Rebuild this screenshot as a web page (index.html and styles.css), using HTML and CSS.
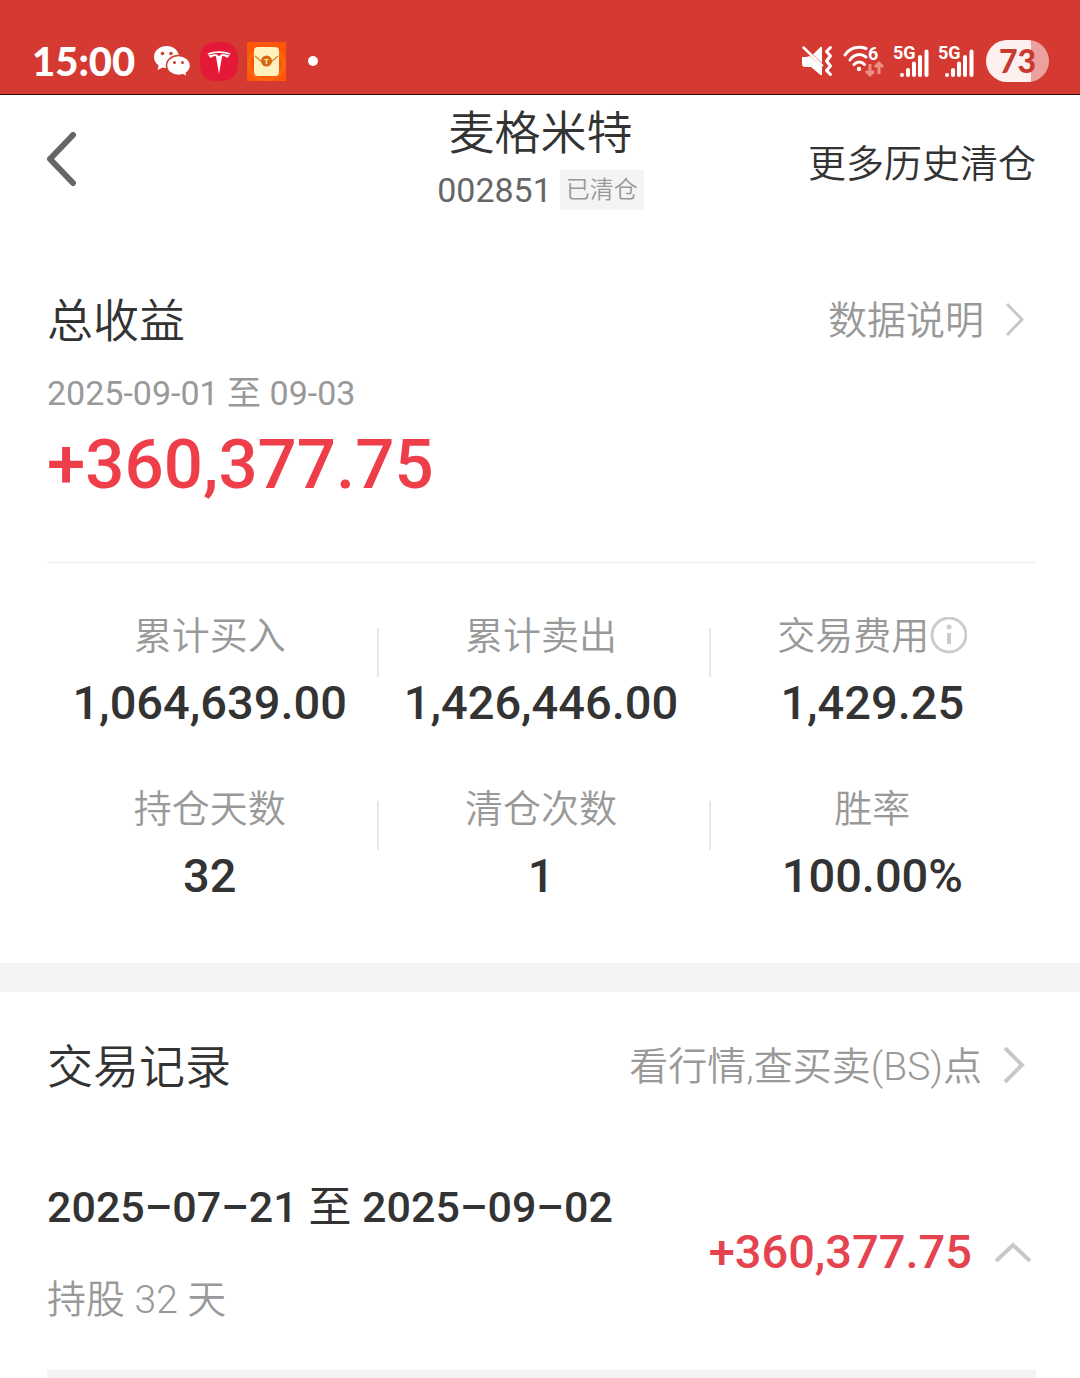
FILE: index.html
```html
<!DOCTYPE html>
<html lang="zh-CN">
<head>
    <meta charset="UTF-8">
    <meta name="viewport" content="width=device-width, initial-scale=1.0">
    <title>麦格米特 已清仓</title>
    <link rel="stylesheet" href="styles.css">
</head>
<body>
    <!-- Status bar -->
    <div class="status-bar">
        <div class="status-left">
            <span class="clock">15:00</span>
            <svg class="icon-wechat" width="38" height="32" viewBox="0 0 38 32" aria-hidden="true">
                <path fill="#fff" d="M14 1C6.500 1 1 5.800 1 12c0 3.500 1.800 6.300 4.600 8.400L4.600 25l5-2.600c1.600.4 3 .6 4.400.6C21.500 23 26 18 26 12S21 1 14 1z"/>
                <path fill="#fff" stroke="#d43a32" stroke-width="1.500" d="M25.500 10.500c-6.500 0-12 4.300-12 10s5.500 10 12 10c1.500 0 3-.3 4.300-.7l4.700 2-1.200-3.800c2.700-1.800 4.200-4.500 4.200-7.500 0-5.700-5.500-10-12-10z"/>
                <g fill="#d43a32">
                    <circle cx="9.500" cy="8.500" r="1.800"/>
                    <circle cx="18" cy="8.500" r="1.800"/>
                    <circle cx="21.500" cy="17.500" r="1.500"/>
                    <circle cx="29.500" cy="17.500" r="1.500"/>
                </g>
            </svg>
            <svg class="icon-app" width="38" height="39" viewBox="0 0 38 39" aria-hidden="true">
                <path fill="#e31937" d="M19 0C33 0 38 5 38 19.500S33 39 19 39 0 34 0 19.500 5 0 19 0z"/>
                <path fill="#fff" d="M7.500 11.500c7-3 16-3 23 0l-.6 1.200c-6.500-2.400-15.300-2.400-21.800 0z"/>
                <path fill="#fff" d="M8.500 13.300c3-.9 5.500-1.300 7.700-1.400L19 14.200l2.800-2.300c2.200.1 4.700.5 7.700 1.400-.7 1.500-1.700 2.400-2.800 2.700-.6-1.300-2-1.800-4.600-1.900L19 32l-3.100-17.900c-2.600.1-4 .6-4.600 1.900-1.100-.3-2.100-1.200-2.800-2.700z"/>
            </svg>
            <svg class="icon-app" width="39" height="39" viewBox="0 0 39 39" aria-hidden="true">
                <defs>
                    <radialGradient id="glow">
                        <stop offset="0.500" stop-color="#f04a00"/>
                        <stop offset="1" stop-color="#ff6a10"/>
                    </radialGradient>
                </defs>
                <rect width="39" height="39" fill="#ff5708"/>
                <ellipse cx="19.500" cy="22" rx="19" ry="17" fill="url(#glow)"/>
                <rect x="7" y="5" width="25" height="29" rx="4" fill="#fff0bf"/>
                <path d="M8 14l7 6h9l7-6" fill="none" stroke="#dc8c35" stroke-width="1.500"/>
                <circle cx="19.500" cy="19" r="5.500" fill="#d96812"/>
                <text class="seal" x="19.500" y="22" text-anchor="middle">T</text>
            </svg>
            <span class="more-dot"></span>
        </div>
        <div class="status-right">
            <svg width="32" height="32" viewBox="0 0 32 32" aria-hidden="true">
                <path fill="#fff" d="M0 12h4l4-1 12 11V29c0 1.200-1 1.700-1.800.8L9 22H3c-2 0-3-1-3-3zM11 9.500l7.200-7.300c.8-.9 1.800-.4 1.800.8v15z"/>
                <path d="M1.500 2.500L20 20.500" stroke="#fff" stroke-width="2.500" stroke-linecap="round"/>
                <path d="M28.500 2.500l-4 4 4 4.500-4 5 4 5-4 4.500 4 4" fill="none" stroke="#fff" stroke-width="3" stroke-linecap="round" stroke-linejoin="round"/>
            </svg>
            <svg width="42" height="40" viewBox="0 0 42 40" aria-hidden="true">
                <g fill="none" stroke="#fff" stroke-width="3" stroke-linecap="round">
                    <path d="M3 14C8 6.500 17 4.500 24 7.500"/>
                    <path d="M8 19C12 13 19 12 24 16"/>
                    <path d="M12 23.500c3-3.500 7.500-3.500 10.500 0"/>
                </g>
                <circle cx="17" cy="28" r="2.200" fill="#fff"/>
                <text class="net-label" x="26" y="19">6</text>
                <g class="traffic">
                    <path d="M28 23v11M24 30l4 4 4-4"/>
                    <path d="M37 33V22M33 26l4-4 4 4"/>
                </g>
            </svg>
            <svg width="37" height="40" viewBox="0 0 37 40" aria-hidden="true">
                <text class="net-label" x="1" y="18">5G</text>
                <path class="bars" d="M10 34v.1M16 34v-5M22 34V22.500M28 34V16M34.500 34V10.500"/>
            </svg>
            <svg width="37" height="40" viewBox="0 0 37 40" aria-hidden="true">
                <text class="net-label" x="1" y="18">5G</text>
                <path class="bars" d="M10 34v.1M16 34v-5M22 34V22.500M28 34V16M34.500 34V10.500"/>
            </svg>
            <span class="battery">73</span>
        </div>
    </div>

    <!-- Header -->
    <header class="header">
        <button type="button" class="back" aria-label="返回">
            <svg width="32" height="56" viewBox="0 0 32 56">
                <path d="M28 3L5 27 28 51" fill="none" stroke="#666" stroke-width="6" stroke-linecap="round" stroke-linejoin="round"/>
            </svg>
        </button>
        <div class="stock">
            <h1>麦格米特</h1>
            <div class="stock-code">002851<span class="tag">已清仓</span></div>
        </div>
        <a href="#" class="history">更多历史清仓</a>
    </header>

    <main>
        <!-- Total profit -->
        <section class="total">
            <div class="section-head">
                <h2>总收益</h2>
                <a href="#" class="more">数据说明
                    <svg width="22" height="38" viewBox="0 0 22 38" aria-hidden="true">
                        <path d="M3 2l15 15.500L3 33" fill="none" stroke="#c8c8c8" stroke-width="3"/>
                    </svg>
                </a>
            </div>
            <p class="range">2025-09-01 至 09-03</p>
            <p class="profit">+360,377.75</p>
        </section>

        <!-- Stats -->
        <dl class="stats">
            <div class="stat">
                <dt>累计买入</dt>
                <dd>1,064,639.00</dd>
            </div>
            <div class="stat">
                <dt>累计卖出</dt>
                <dd>1,426,446.00</dd>
            </div>
            <div class="stat">
                <dt>交易费用<button type="button" class="info" aria-label="费用说明">
                    <svg width="38" height="38" viewBox="0 0 38 38">
                        <circle cx="20" cy="18" r="17" fill="none" stroke="#ccc" stroke-width="3"/>
                        <circle cx="20" cy="10" r="2.500" fill="#ccc"/>
                        <path d="M20 16v11" stroke="#ccc" stroke-width="4"/>
                    </svg>
                </button></dt>
                <dd>1,429.25</dd>
            </div>
            <div class="stat">
                <dt>持仓天数</dt>
                <dd>32</dd>
            </div>
            <div class="stat">
                <dt>清仓次数</dt>
                <dd>1</dd>
            </div>
            <div class="stat">
                <dt>胜率</dt>
                <dd>100.00%</dd>
            </div>
        </dl>

        <!-- Trade records -->
        <section class="records">
            <div class="section-head">
                <h2>交易记录</h2>
                <a href="#" class="more">看行情,查买卖(BS)点
                    <svg width="24" height="40" viewBox="0 0 24 40" aria-hidden="true">
                        <path d="M3 1l17 17L3 35" fill="none" stroke="#c8c8c8" stroke-width="4"/>
                    </svg>
                </a>
            </div>
            <div class="record">
                <div>
                    <h3>2025–07–21 <span class="cn">至</span> 2025–09–02</h3>
                    <p class="days">持股 32 天</p>
                </div>
                <div class="record-profit">
                    <span>+360,377.75</span>
                    <button type="button" class="toggle" aria-label="收起">
                        <svg width="38" height="22" viewBox="0 0 38 22">
                            <path d="M2 21L19 5l17 16" fill="none" stroke="#c8c8c8" stroke-width="4"/>
                        </svg>
                    </button>
                </div>
            </div>
            <div class="record-line"></div>
        </section>
    </main>
</body>
</html>
```
FILE: styles.css
```css
* {
    box-sizing: border-box;
}

body {
    margin: 0;
    font-family: Roboto, "Noto Sans CJK SC", sans-serif;
    background-color: #fff;
    color: #333;
}

h1, h2, h3, p, dl, dd {
    margin: 0;
    font-weight: 400;
}

a {
    color: inherit;
    text-decoration: none;
}

button {
    padding: 0;
    border: none;
    background: none;
    cursor: pointer;
}

svg {
    display: block;
    flex-shrink: 0;
}

/* Status bar */
.status-bar {
    display: flex;
    justify-content: space-between;
    height: 95px;
    padding: 28px 31px 0 32px;
    background-color: #d43a32;
    border-bottom: 1px solid #2b1010;
    color: #fff;
}

.status-left, .status-right {
    display: flex;
    align-items: center;
    height: 66px;
}

.clock {
    margin-right: 18px;
    font-family: Lato, sans-serif;
    font-size: 40px;
    font-weight: 900;
    line-height: 48px;
}

.icon-app {
    margin-left: 9px;
}

.seal {
    font-size: 8px;
    font-weight: 700;
    fill: #fff0bf;
}

.more-dot {
    width: 10px;
    height: 10px;
    margin-left: 22px;
    border-radius: 50%;
    background-color: #fff;
}

.status-right {
    gap: 8px;
}

.net-label {
    font-size: 18px;
    font-weight: 700;
    fill: #fff;
}

.traffic {
    fill: none;
    stroke: #ee8f87;
    stroke-width: 3;
}

.bars {
    stroke: #fff;
    stroke-width: 4;
    stroke-linecap: round;
}

.battery {
    width: 63px;
    margin-left: 4px;
    border-radius: 21px;
    background: linear-gradient(to right, #fdf0ef 72%, #eba19d 72%);
    color: #c93a31;
    font-family: Lato, sans-serif;
    font-size: 32px;
    font-weight: 900;
    line-height: 42px;
    text-align: center;
}

/* Header */
.header {
    display: grid;
    grid-template-columns: 1fr auto 1fr;
    align-items: center;
    padding: 8px 44px 0 45px;
}

.stock {
    text-align: center;
}

h1, h2 {
    font-size: 46px;
    font-weight: 350;
    line-height: 60px;
}

.stock-code {
    display: flex;
    align-items: center;
    gap: 8px;
    color: #666;
    font-size: 34px;
    line-height: 54px;
}

.tag {
    padding: 0 6px;
    border-radius: 2px;
    background-color: #f4f4f4;
    color: #999;
    font-size: 24px;
    font-weight: 350;
    line-height: 40px;
}

.history {
    justify-self: end;
    font-size: 38px;
    font-weight: 350;
}

.cn {
    font-weight: 400;
}

/* Sections */
.section-head {
    display: flex;
    justify-content: space-between;
    align-items: center;
}

.more {
    display: flex;
    align-items: center;
    gap: 20px;
    padding-right: 10px;
    color: #999;
    font-size: 39px;
    font-weight: 350;
    line-height: 60px;
}

.total {
    margin: 0 44px 0 47px;
    padding: 74px 0 52px;
    border-bottom: 1px solid #eee;
}

.range {
    margin-top: 15px;
    color: #999;
    font-size: 34px;
    line-height: 54px;
}

.profit {
    color: #ee3e4a;
    font-size: 69px;
    font-weight: 500;
    line-height: 90px;
}

.stats {
    display: grid;
    grid-template-columns: repeat(3, 1fr);
    row-gap: 39px;
    padding: 42px 42px 51px 44px;
    text-align: center;
}

.stat {
    position: relative;
}

/* divider between columns */
.stat:not(:nth-child(3n))::after {
    content: "";
    position: absolute;
    top: 23px;
    right: -4px;
    width: 2px;
    height: 49px;
    background-color: #e8e8e8;
}

.stat dt {
    display: flex;
    justify-content: center;
    align-items: center;
    color: #999;
    font-size: 38px;
    font-weight: 350;
    line-height: 62px;
}

.stat dd {
    font-size: 47px;
    font-weight: 500;
    line-height: 72px;
}

/* Records */
.records {
    padding: 45px 44px 0 47px;
    border-top: 29px solid #f4f4f4;
}

.record {
    display: flex;
    justify-content: space-between;
    align-items: center;
    padding: 78px 4px 43px 0;
}

.record h3 {
    font-size: 43px;
    font-weight: 500;
    line-height: 64px;
}

.days {
    margin-top: 34px;
    color: #999;
    font-size: 39px;
    font-weight: 350;
    line-height: 54px;
}

.record-profit {
    display: flex;
    align-items: center;
    gap: 22px;
    color: #e4434f;
    font-size: 47px;
    font-weight: 500;
}

.record-line {
    height: 8px;
    background-color: #f4f4f4;
}
```
